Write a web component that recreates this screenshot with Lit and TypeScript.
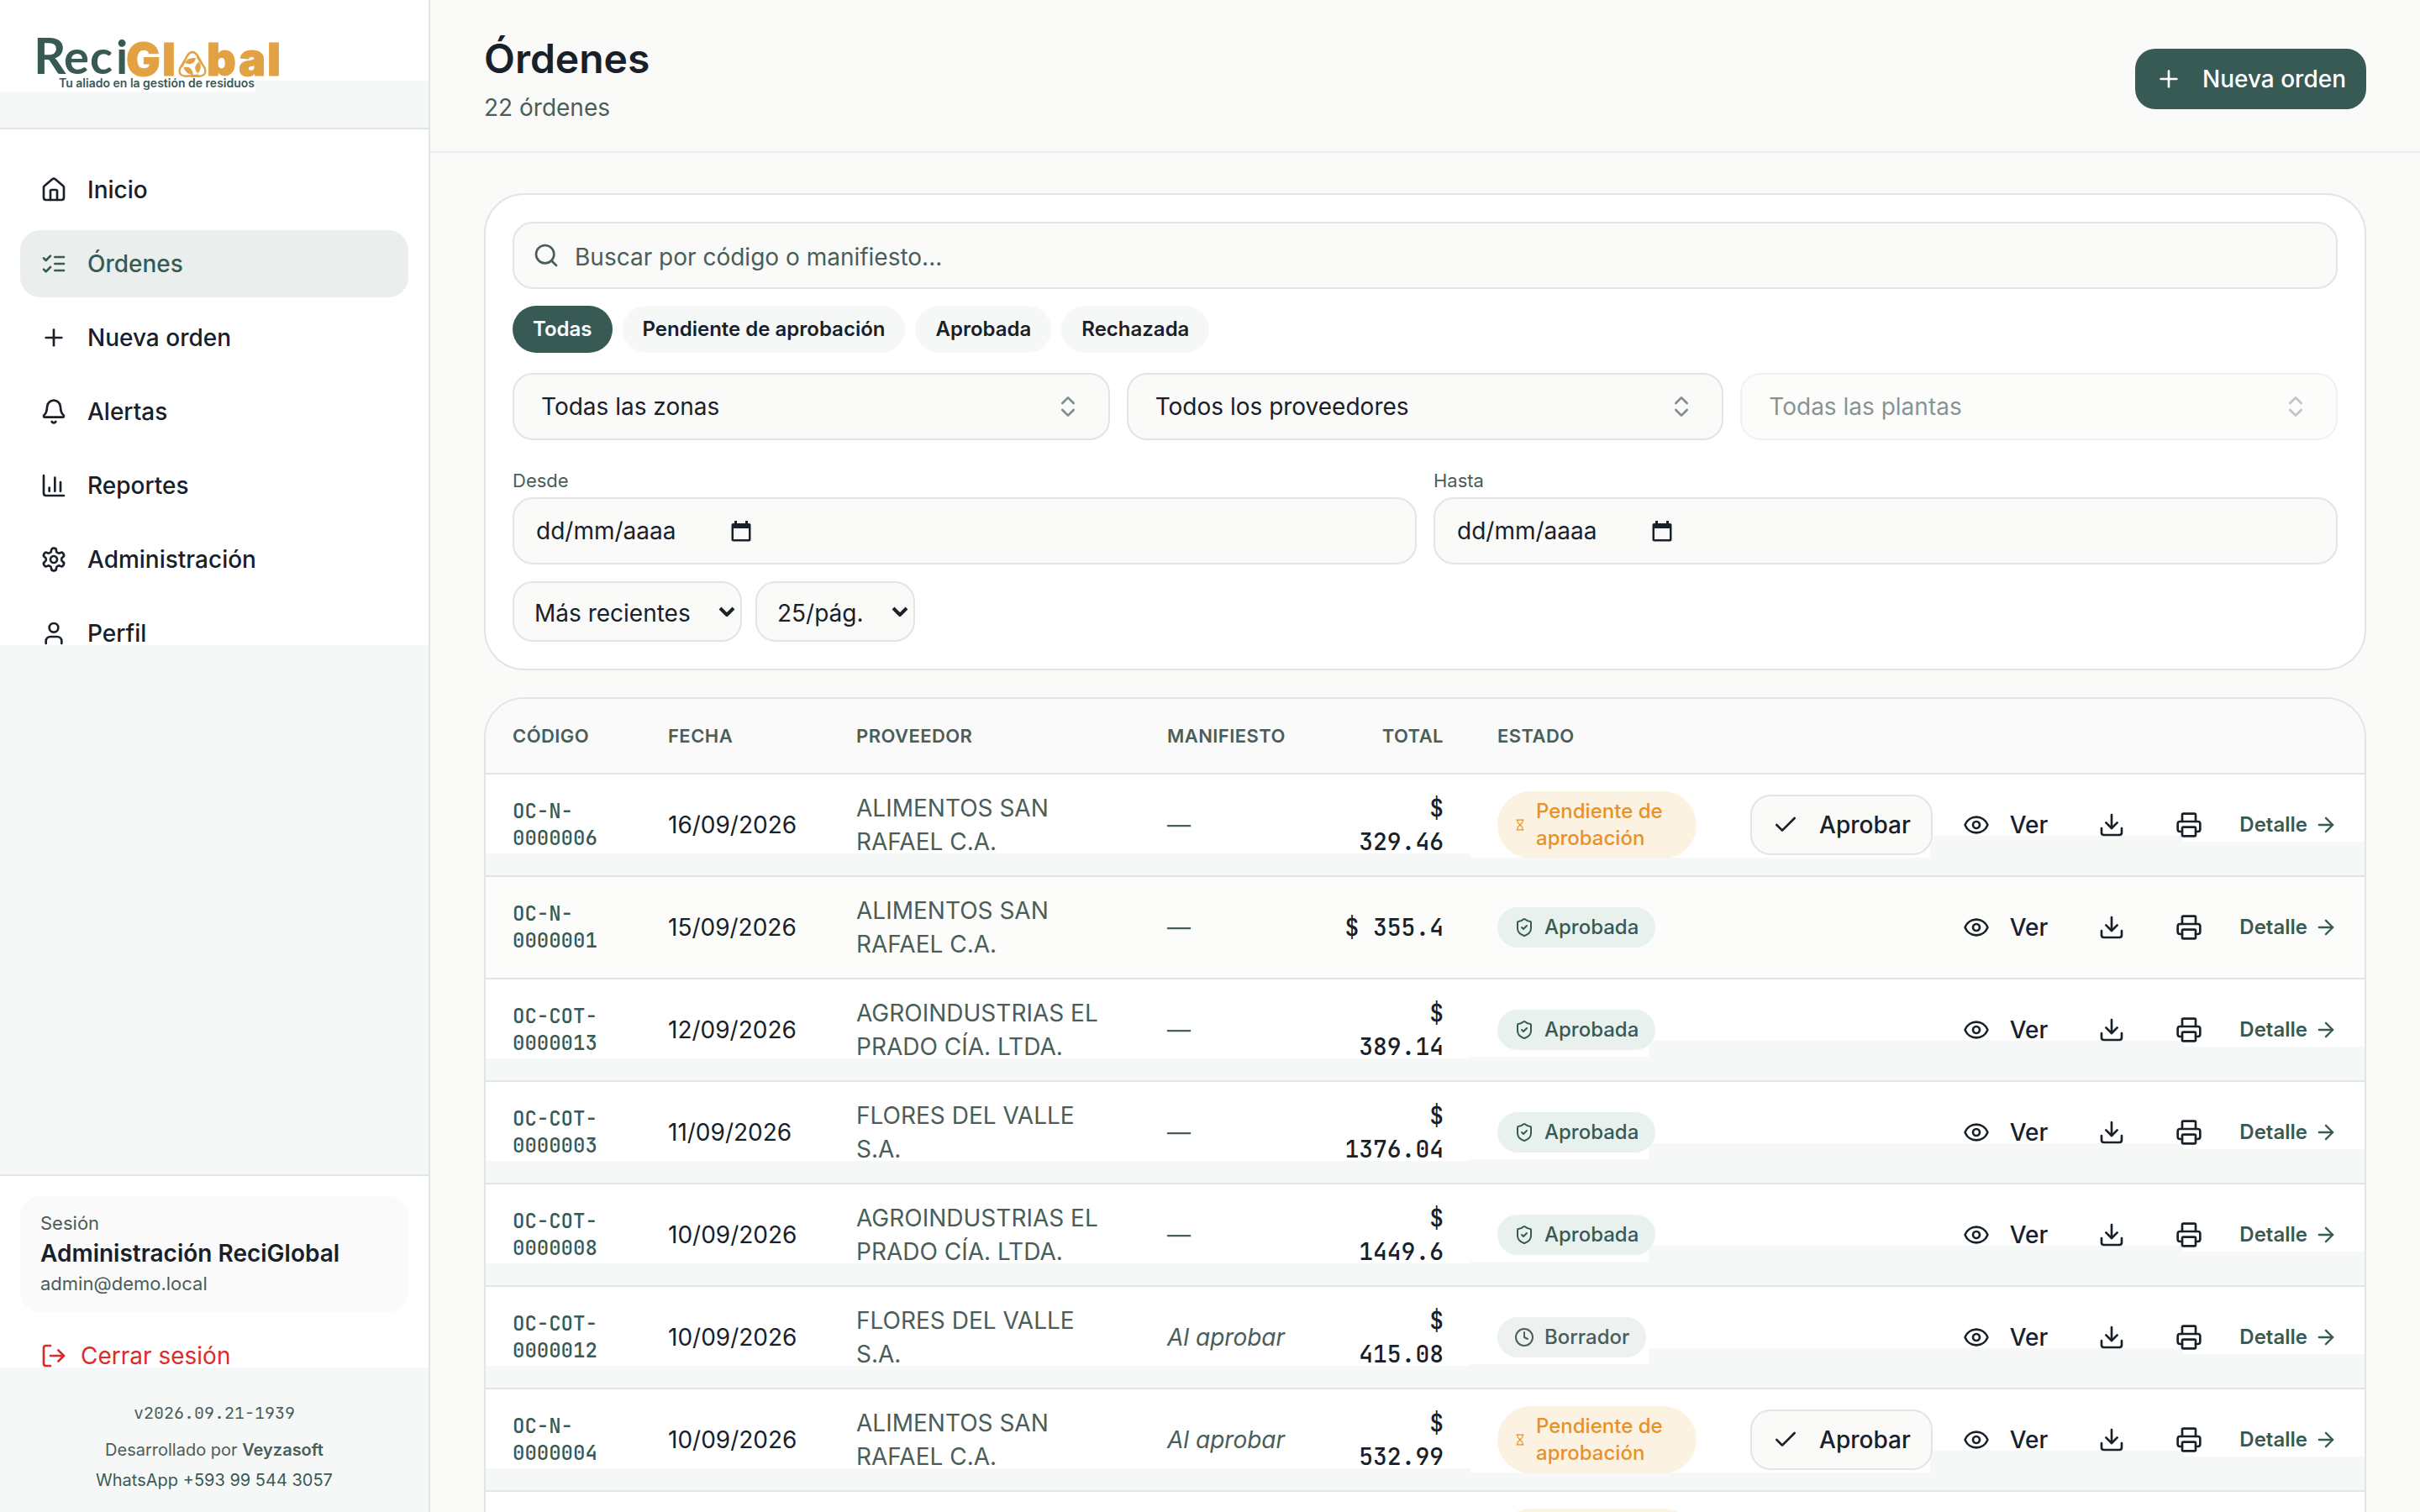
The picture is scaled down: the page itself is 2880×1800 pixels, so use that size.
import { LitElement, html, svg, css, nothing } from "lit";
import type { SVGTemplateResult } from "lit";
import { customElement, property } from "lit/decorators.js";
import { classMap } from "lit/directives/class-map.js";

const ICONS: Record<string, SVGTemplateResult> = {
  house: svg`<path d="M15 21v-8a1 1 0 0 0-1-1h-4a1 1 0 0 0-1 1v8"/><path d="M3 10a2 2 0 0 1 .709-1.528l7-5.999a2 2 0 0 1 2.582 0l7 5.999A2 2 0 0 1 21 10v9a2 2 0 0 1-2 2H5a2 2 0 0 1-2-2z"/>`,
  list: svg`<path d="m3 17 2 2 4-4"/><path d="m3 7 2 2 4-4"/><path d="M13 6h8"/><path d="M13 12h8"/><path d="M13 18h8"/>`,
  plus: svg`<path d="M5 12h14"/><path d="M12 5v14"/>`,
  bell: svg`<path d="M10.268 21a2 2 0 0 0 3.464 0"/><path d="M3.262 15.326A1 1 0 0 0 4 17h16a1 1 0 0 0 .74-1.673C19.41 13.956 18 12.499 18 8A6 6 0 0 0 6 8c0 4.499-1.411 5.956-2.738 7.326"/>`,
  chart: svg`<path d="M3 3v16a2 2 0 0 0 2 2h16"/><path d="M18 17V9"/><path d="M13 17V5"/><path d="M8 17v-3"/>`,
  gear: svg`<path d="M12.22 2h-.44a2 2 0 0 0-2 2v.18a2 2 0 0 1-1 1.73l-.43.25a2 2 0 0 1-2 0l-.15-.08a2 2 0 0 0-2.73.73l-.22.38a2 2 0 0 0 .73 2.73l.15.1a2 2 0 0 1 1 1.72v.51a2 2 0 0 1-1 1.74l-.15.09a2 2 0 0 0-.73 2.73l.22.38a2 2 0 0 0 2.73.73l.15-.08a2 2 0 0 1 2 0l.43.25a2 2 0 0 1 1 1.73V20a2 2 0 0 0 2 2h.44a2 2 0 0 0 2-2v-.18a2 2 0 0 1 1-1.73l.43-.25a2 2 0 0 1 2 0l.15.08a2 2 0 0 0 2.73-.73l.22-.39a2 2 0 0 0-.73-2.73l-.15-.08a2 2 0 0 1-1-1.74v-.5a2 2 0 0 1 1-1.74l.15-.09a2 2 0 0 0 .73-2.73l-.22-.38a2 2 0 0 0-2.73-.73l-.15.08a2 2 0 0 1-2 0l-.43-.25a2 2 0 0 1-1-1.73V4a2 2 0 0 0-2-2z"/><circle cx="12" cy="12" r="3"/>`,
  user: svg`<path d="M19 21v-2a4 4 0 0 0-4-4H9a4 4 0 0 0-4 4v2"/><circle cx="12" cy="7" r="4"/>`,
  logout: svg`<path d="m16 17 5-5-5-5"/><path d="M21 12H9"/><path d="M9 21H5a2 2 0 0 1-2-2V5a2 2 0 0 1 2-2h4"/>`,
  search: svg`<path d="m21 21-4.34-4.34"/><circle cx="11" cy="11" r="8"/>`,
  updown: svg`<path d="m7 15 5 5 5-5"/><path d="m7 9 5-5 5 5"/>`,
  check: svg`<path d="M20 6 9 17l-5-5"/>`,
  eye: svg`<path d="M2.062 12.348a1 1 0 0 1 0-.696 10.75 10.75 0 0 1 19.876 0 1 1 0 0 1 0 .696 10.75 10.75 0 0 1-19.876 0"/><circle cx="12" cy="12" r="3"/>`,
  download: svg`<path d="M12 15V3"/><path d="M21 15v4a2 2 0 0 1-2 2H5a2 2 0 0 1-2-2v-4"/><path d="m7 10 5 5 5-5"/>`,
  printer: svg`<path d="M6 18H4a2 2 0 0 1-2-2v-5a2 2 0 0 1 2-2h16a2 2 0 0 1 2 2v5a2 2 0 0 1-2 2h-2"/><path d="M6 9V3a1 1 0 0 1 1-1h10a1 1 0 0 1 1 1v6"/><rect x="6" y="14" width="12" height="8" rx="1"/>`,
  arrow: svg`<path d="M5 12h14"/><path d="m12 5 7 7-7 7"/>`,
  shield: svg`<path d="M20 13c0 5-3.5 7.5-7.66 8.95a1 1 0 0 1-.67-.01C7.5 20.5 4 18 4 13V6a1 1 0 0 1 1-1c2 0 4.5-1.2 6.24-2.72a1.17 1.17 0 0 1 1.52 0C14.51 3.81 17 5 19 5a1 1 0 0 1 1 1z"/><path d="m9 12 2 2 4-4"/>`,
  hourglass: svg`<path d="M5 22h14"/><path d="M5 2h14"/><path d="M17 22v-4.172a2 2 0 0 0-.586-1.414L12 12l-4.414 4.414A2 2 0 0 0 7 17.828V22"/><path d="M7 2v4.172a2 2 0 0 0 .586 1.414L12 12l4.414-4.414A2 2 0 0 0 17 6.172V2"/>`,
  clock: svg`<circle cx="12" cy="12" r="10"/><path d="M12 6v6l4 2"/>`,
};

const icon = (name: string, size = "") => html`<svg
  class="icon ${size}"
  viewBox="0 0 24 24"
  fill="none"
  stroke="currentColor"
  stroke-width="2"
  stroke-linecap="round"
  stroke-linejoin="round"
  aria-hidden="true"
>${ICONS[name]}</svg>`;

const shared = css`
  * { box-sizing: border-box; }
  .icon { display: block; flex: none; width: 32px; height: 32px; }
  .icon.s28 { width: 28px; height: 28px; }
  .icon.s24 { width: 24px; height: 24px; }
  .icon.s14 { width: 14px; height: 14px; }
  button, input, select { font: inherit; color: inherit; margin: 0; }
  button { cursor: pointer; border: 0; background: none; padding: 0; }
  a { color: inherit; text-decoration: none; }
`;

type Status = "pendiente" | "aprobada" | "borrador";
interface Order {
  code: string;
  date: string;
  supplier: string;
  manifest: string;
  total: string;
  status: Status;
}

const AS = "ALIMENTOS SAN RAFAEL C.A.";
const AP = "AGROINDUSTRIAS EL PRADO CÍA. LTDA.";
const FV = "FLORES DEL VALLE S.A.";

const ORDERS: Order[] = [
  { code: "OC-N-0000006", date: "16/09/2026", supplier: AS, manifest: "—", total: "$ 329.46", status: "pendiente" },
  { code: "OC-N-0000001", date: "15/09/2026", supplier: AS, manifest: "—", total: "$ 355.4", status: "aprobada" },
  { code: "OC-COT-0000013", date: "12/09/2026", supplier: AP, manifest: "—", total: "$ 389.14", status: "aprobada" },
  { code: "OC-COT-0000003", date: "11/09/2026", supplier: FV, manifest: "—", total: "$ 1376.04", status: "aprobada" },
  { code: "OC-COT-0000008", date: "10/09/2026", supplier: AP, manifest: "—", total: "$ 1449.6", status: "aprobada" },
  { code: "OC-COT-0000012", date: "10/09/2026", supplier: FV, manifest: "Al aprobar", total: "$ 415.08", status: "borrador" },
  { code: "OC-N-0000004", date: "10/09/2026", supplier: AS, manifest: "Al aprobar", total: "$ 532.99", status: "pendiente" },
  { code: "", date: "", supplier: "", manifest: "", total: "", status: "pendiente" },
];

@customElement("status-pill")
export class StatusPill extends LitElement {
  @property() status: Status = "aprobada";

  static styles = [
    shared,
    css`
      :host { display: block; }
      .pill {
        display: inline-flex; align-items: center; gap: 12px; vertical-align: top;
        padding: 8px 20px; border-radius: 40px;
        font-size: 24px; line-height: 32px; font-weight: 500;
      }
      .pendiente { color: #e8912a; background: #fcf2e2; }
      .aprobada { color: #385a55; background: #e9f1ef; }
      .borrador { color: #4a5d59; background: #edf1f0; }
    `,
  ];

  render() {
    const label = { pendiente: "Pendiente de aprobación", aprobada: "Aprobada", borrador: "Borrador" }[this.status];
    const glyph = { pendiente: "hourglass", aprobada: "shield", borrador: "clock" }[this.status];
    return html`<span class="pill ${this.status}">
      ${icon(glyph, this.status === "pendiente" ? "s14" : "s24")}<span>${label}</span>
    </span>`;
  }
}

@customElement("side-bar")
export class SideBar extends LitElement {
  static styles = [
    shared,
    css`
      :host {
        display: flex; flex-direction: column; flex: none; width: 512px;
        border-right: 2px solid #dfe6e5; background: #fff;
      }
      .brand {
        padding: 40px; border-bottom: 2px solid #dfe6e5;
        background:
          linear-gradient(#fff 109px, #f6f8f7 109px) 0 0 / 304px 100% no-repeat,
          linear-gradient(#fff 96px, #f6f8f7 96px);
      }
      .brand svg { display: block; width: 296px; height: 72px; overflow: visible; }
      .g { fill: #385a55; font-family: Lato, sans-serif; font-weight: 700; }
      .o {
        fill: #e2a243; stroke: #e2a243; stroke-width: 1;
        font-family: Inter, sans-serif; font-weight: 900; font-size: 54px;
      }
      .tag { fill: #385a55; font-family: Inter, sans-serif; font-weight: 600; font-size: 14px; }
      nav {
        flex: 1; display: flex; flex-direction: column; gap: 8px; padding: 32px 24px;
        background: linear-gradient(#fff 614px, #f6f8f7 614px);
      }
      .item {
        display: flex; align-items: center; gap: 24px; height: 80px; padding: 0 24px;
        border-radius: 24px; font-weight: 500;
      }
      .item.active { background: #eaefee; color: #385a55; }
      footer {
        border-top: 2px solid #dfe6e5; padding: 24px 24px 20px;
        background: linear-gradient(#fff 228px, #f6f8f7 228px);
      }
      .session { padding: 16px 24px 18px; border-radius: 24px; background: #f9faf9; }
      .small { font-size: 22px; line-height: 32px; color: #4a5d59; }
      .name { font-weight: 600; line-height: 40px; }
      .logout {
        display: flex; align-items: center; gap: 16px; width: 100%; height: 72px;
        margin-top: 16px; padding: 0 24px; color: #dc2b28;
      }
      .credits {
        margin-top: 14px; text-align: center; color: #4a5d59;
        font-size: 20px; line-height: 36px;
      }
      .credits p { margin: 0; }
      .credits p.version { margin-bottom: 8px; font-family: "JetBrains Mono", "DejaVu Sans Mono", monospace; }
      .credits strong { font-weight: 600; }
      .credits a { color: #385a55; }
    `,
  ];

  render() {
    const items: [string, string][] = [
      ["house", "Inicio"],
      ["list", "Órdenes"],
      ["plus", "Nueva orden"],
      ["bell", "Alertas"],
      ["chart", "Reportes"],
      ["gear", "Administración"],
      ["user", "Perfil"],
    ];
    return html`
      <div class="brand">
        <svg viewBox="40 40 296 72" role="img" aria-label="ReciGlobal">
          <text class="g" font-size="60" x="40" y="88">R</text>
          <text class="g" font-size="56" y="88"><tspan x="76">e</tspan><tspan x="107">c</tspan><tspan x="138">i</tspan></text>
          <text class="o" y="90"><tspan x="150">G</tspan><tspan x="193">l</tspan><tspan x="246">b</tspan><tspan x="284">a</tspan><tspan x="318">l</tspan></text>
          <g transform="translate(229 79)">
            ${[0, 120, 240].map(
              (a) => svg`<g transform="rotate(${a})">
                <path d="M-13 1 L-6 -13 Q0 -21 6 -13 L11 -4" fill="none" stroke="#e2a243" stroke-width="2.4"/>
                <path d="M-9 -4 Q-6 -11 4 -10 Q3 -4 -2 -3 Q-5 -2.400 -9 -4z" fill="#e2a243"/>
              </g>`,
            )}
          </g>
          <text class="tag" x="70" y="104">Tu aliado en la gestión de residuos</text>
        </svg>
      </div>
      <nav aria-label="Principal">
        ${items.map(
          ([glyph, label]) => html`<a href="#" class=${classMap({ item: true, active: label === "Órdenes" })}>
            ${icon(glyph)}<span>${label}</span>
          </a>`,
        )}
      </nav>
      <footer>
        <div class="session">
          <div class="small">Sesión</div>
          <div class="name">Administración ReciGlobal</div>
          <div class="small">admin@demo.local</div>
        </div>
        <button class="logout" type="button">${icon("logout")}<span>Cerrar sesión</span></button>
        <div class="credits">
          <p class="version">v2026.09.21-1939</p>
          <p>Desarrollado por <strong>Veyzasoft</strong></p>
          <p><a href="#">WhatsApp +593 99 544 3057</a></p>
        </div>
      </footer>
    `;
  }
}

@customElement("order-filters")
export class OrderFilters extends LitElement {
  static styles = [
    shared,
    css`
      :host {
        display: flex; flex-direction: column; gap: 20px; padding: 32px;
        border: 2px solid #dfe6e5; border-radius: 48px; background: #fff;
      }
      .field {
        display: flex; align-items: center; height: 80px;
        border: 2px solid #dfe6e5; border-radius: 24px; background: #fafaf8;
      }
      .field input {
        flex: 1; min-width: 0; height: 100%; padding: 0; border: 0; outline: 0; background: none;
      }
      .search { gap: 18px; padding: 0 22px; color: #4a5d59; }
      .search input { padding-top: 3px; }
      input::placeholder { color: inherit; opacity: 1; }
      .chips { display: flex; gap: 12px; margin-bottom: 4px; }
      .chip {
        height: 56px; padding: 0 24px; border-radius: 28px; background: #f6f8f7;
        font-size: 24px; font-weight: 600;
      }
      .chip.on { background: #385a55; color: #fff; }
      .three { display: grid; grid-template-columns: repeat(3, 1fr); gap: 20px; }
      .combo { justify-content: space-between; width: 100%; padding: 0 32px; text-align: left; }
      .combo .icon { color: #80908d; }
      .combo:disabled { opacity: 0.5; color: #18202a; }
      .combo:disabled span { color: #0e2a26; }
      .two { display: grid; grid-template-columns: repeat(2, 1fr); gap: 20px; margin-top: 12px; }
      label { display: block; margin-bottom: 4px; font-size: 22px; line-height: 32px; color: #4a5d59; }
      .date { padding: 0 26px; }
      .date input { flex: none; width: 228px; }
      .date button { display: flex; }
      .calendar { display: block; width: 32px; height: 32px; }
      .selects { display: flex; gap: 16px; }
      .drop {
        display: grid; align-items: center; height: 72px;
        border: 2px solid #dfe6e5; border-radius: 24px; background: #fafaf8;
      }
      .drop select {
        grid-area: 1 / 1; height: 100%; padding: 3px 59px 0 24px; border: 0; outline: 0;
        appearance: none; background: none;
      }
      .drop svg {
        grid-area: 1 / 1; justify-self: end; width: 20px; height: 12px; margin-right: 6px;
        pointer-events: none;
      }
    `,
  ];

  private combo(label: string, disabled = false) {
    return html`<button type="button" class="field combo" ?disabled=${disabled}>
      <span>${label}</span>${icon("updown")}
    </button>`;
  }

  private date(id: string, label: string) {
    return html`<div>
      <label for=${id}>${label}</label>
      <div class="field date">
        <input id=${id} type="text" placeholder="dd/mm/aaaa" />
        <button type="button" aria-label="Abrir calendario">
          <svg class="calendar" viewBox="0 0 32 32">
            <path fill="#18202a" d="M8 4h3v3h10V4h3v3h1.500a2 2 0 0 1 2 2v17.500a2 2 0 0 1-2 2h-19a2 2 0 0 1-2-2V9a2 2 0 0 1 2-2H8zM7 13v13h18V13z"/>
          </svg>
        </button>
      </div>
    </div>`;
  }

  private drop(label: string, option: string) {
    return html`<div class="drop">
      <select aria-label=${label}><option>${option}</option></select>
      <svg viewBox="0 0 20 12" aria-hidden="true">
        <path d="M2 2l8 8 8-8" fill="none" stroke="#18202a" stroke-width="4"/>
      </svg>
    </div>`;
  }

  render() {
    const chips = ["Todas", "Pendiente de aprobación", "Aprobada", "Rechazada"];
    return html`
      <div class="field search">
        ${icon("search")}
        <input type="text" aria-label="Buscar" placeholder="Buscar por código o manifiesto..." />
      </div>
      <div class="chips">
        ${chips.map((c, i) => html`<button type="button" class=${classMap({ chip: true, on: i === 0 })}>${c}</button>`)}
      </div>
      <div class="three">
        ${this.combo("Todas las zonas")}${this.combo("Todos los proveedores")}${this.combo("Todas las plantas", true)}
      </div>
      <div class="two">${this.date("desde", "Desde")}${this.date("hasta", "Hasta")}</div>
      <div class="selects">${this.drop("Orden", "Más recientes")}${this.drop("Por página", "25/pág.")}</div>
    `;
  }
}

@customElement("order-table")
export class OrderTable extends LitElement {
  static styles = [
    shared,
    css`
      :host {
        display: block; overflow: hidden;
        border: 2px solid #dfe6e5; border-radius: 48px; background: #fff;
      }
      table { width: 100%; table-layout: fixed; border-collapse: separate; border-spacing: 0; }
      .c1 { width: 185px; }
      .c2 { width: 224px; }
      .c3 { width: 370px; }
      .c4 { width: 205px; }
      .c5 { width: 188px; }
      .c6 { width: 301px; }
      th, td { padding: 20px 32px; text-align: left; vertical-align: middle; border-bottom: 2px solid #dfe6e5; }
      th {
        padding: 28px 32px; background: #f9faf9; color: #4a5d59;
        font-size: 22px; line-height: 32px; font-weight: 600; letter-spacing: 0.02em;
      }
      td { height: 122px; line-height: 40px; background: linear-gradient(#fff 94px, #f6f8f7 94px); }
      .code { font-size: 24px; line-height: 32px; color: #385a55; }
      .code, .total { font-family: "JetBrains Mono", "DejaVu Sans Mono", monospace; font-weight: 500; }
      .supplier, .manifest { color: #4a5d59; }
      .auto { font-style: italic; }
      .right { text-align: right; }
      .state {
        background:
          linear-gradient(#fff 92px, #f6f8f7 92px) 0 0 / 212px 100% no-repeat,
          linear-gradient(#fff 73px, #f6f8f7 73px);
      }
      .acts {
        background:
          linear-gradient(#fff 80px, #f6f8f7 80px) 100% 0 / 216px 100% no-repeat,
          linear-gradient(#fff 73px, #f6f8f7 73px);
      }
      .pend .state { background: linear-gradient(#fff 99px, #f6f8f7 99px); }
      .pend .acts {
        background:
          linear-gradient(#fff 99px, #f6f8f7 99px) 0 0 / 246px 100% no-repeat,
          linear-gradient(#fff 80px, #f6f8f7 80px) 100% 0 / 216px 100% no-repeat,
          linear-gradient(#fff 73px, #f6f8f7 73px);
      }
      tr.plain td { background: #fcfcfb; }
      .actions { display: flex; align-items: center; justify-content: flex-end; gap: 12px; }
      .actions button { display: flex; align-items: center; gap: 24px; height: 72px; padding: 0 24px; font-weight: 500; }
      .actions .approve { border: 2px solid #dfe6e5; border-radius: 24px; background: #fafaf8; }
      .detail {
        display: flex; align-items: center; gap: 8px; padding-left: 8px;
        font-size: 24px; line-height: 32px; font-weight: 600; color: #385a55;
      }
    `,
  ];

  private row(o: Order, i: number) {
    const pending = o.status === "pendiente";
    return html`<tr class=${classMap({ pend: pending, plain: i === 1 })}>
      <td class="code">${o.code}</td>
      <td>${o.date}</td>
      <td class="supplier">${o.supplier}</td>
      <td class=${classMap({ manifest: true, auto: o.manifest.length > 1 })}>${o.manifest}</td>
      <td class="total right">${o.total}</td>
      <td class="state"><status-pill status=${o.status}></status-pill></td>
      <td class="acts">
        ${o.code
          ? html`<div class="actions">
              ${pending
                ? html`<button type="button" class="approve">${icon("check")}<span>Aprobar</span></button>`
                : nothing}
              <button type="button">${icon("eye")}<span>Ver</span></button>
              <button type="button" aria-label="Descargar">${icon("download")}</button>
              <button type="button" aria-label="Imprimir">${icon("printer")}</button>
              <a class="detail" href="#"><span>Detalle</span>${icon("arrow", "s28")}</a>
            </div>`
          : nothing}
      </td>
    </tr>`;
  }

  render() {
    return html`<table>
      <colgroup>
        <col class="c1" /><col class="c2" /><col class="c3" /><col class="c4" /><col class="c5" /><col class="c6" /><col />
      </colgroup>
      <thead>
        <tr>
          <th>CÓDIGO</th>
          <th>FECHA</th>
          <th>PROVEEDOR</th>
          <th>MANIFIESTO</th>
          <th class="right">TOTAL</th>
          <th>ESTADO</th>
          <th></th>
        </tr>
      </thead>
      <tbody>
        ${ORDERS.map((o, i) => this.row(o, i))}
      </tbody>
    </table>`;
  }
}

@customElement("app-root")
export class AppRoot extends LitElement {
  static styles = [
    shared,
    css`
      :host {
        display: flex; height: 100vh; overflow: hidden; background: #fafaf8; color: #18202a;
        font-family: Inter, "Liberation Sans", sans-serif; font-size: 28px; line-height: 40px;
      }
      main { flex: 1; min-width: 0; overflow-y: auto; scrollbar-width: none; }
      header {
        display: flex; align-items: center; justify-content: space-between;
        padding: 40px 64px 32px; border-bottom: 2px solid #e8efed;
      }
      h1 { margin: 0 0 8px; font-size: 48px; line-height: 60px; font-weight: 600; }
      .count { margin: 0; color: #4a5d59; }
      .new {
        display: flex; align-items: center; gap: 24px; height: 72px; padding: 0 24px;
        border-radius: 24px; background: #385a55; color: #fff; font-weight: 500;
      }
      .content { display: flex; flex-direction: column; gap: 32px; padding: 48px 64px; }
    `,
  ];

  render() {
    return html`
      <side-bar></side-bar>
      <main>
        <header>
          <div>
            <h1>Órdenes</h1>
            <p class="count">22 órdenes</p>
          </div>
          <button type="button" class="new">${icon("plus")}<span>Nueva orden</span></button>
        </header>
        <div class="content">
          <order-filters></order-filters>
          <order-table></order-table>
        </div>
      </main>
    `;
  }
}
